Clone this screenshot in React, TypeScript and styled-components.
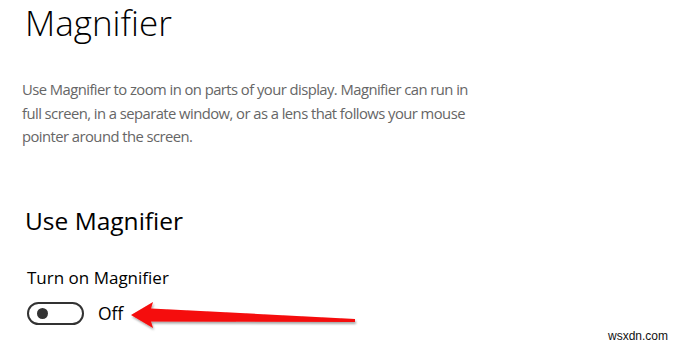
import React from 'react';
import styled, { createGlobalStyle } from 'styled-components';

const GlobalStyle = createGlobalStyle`
  html, body {
    margin: 0;
    padding: 0;
    background: #ffffff;
  }
  body {
    font-family: "Open Sans", "Noto Sans", sans-serif;
    color: #000000;
  }
`;

function RedArrow() {
  return (
    <ArrowSvg width="232" height="34" viewBox="0 0 232 34">
      <defs>
        <filter id="arrow-shadow" x="-5%" y="-30%" width="110%" height="170%">
          <feDropShadow dx="1" dy="2" stdDeviation="1.2" floodColor="#000" floodOpacity="0.35" />
        </filter>
      </defs>
      <path
        d="M2 15 L24 2 L22 8.5 L226 19 L226 22 L22 21.5 L24 28 Z"
        fill="#f50a0a"
        filter="url(#arrow-shadow)"
      />
    </ArrowSvg>
  );
}

function App() {
  return (
    <>
      <GlobalStyle />
      <Page>
        <Title>Magnifier</Title>
        <Description>
          Use Magnifier to zoom in on parts of your display. Magnifier can run in
          <br />
          full screen, in a separate window, or as a lens that follows your mouse
          <br />
          pointer around the screen.
        </Description>
        <SectionHeading>Use Magnifier</SectionHeading>
        <SettingLabel>Turn on Magnifier</SettingLabel>
        <ToggleRow>
          <Toggle>
            <Knob />
          </Toggle>
          <ToggleState>Off</ToggleState>
          <RedArrow />
        </ToggleRow>
        <Watermark>wsxdn.com</Watermark>
      </Page>
    </>
  );
}

const Page = styled.div`
  position: relative;
  width: 680px;
  height: 343px;
  padding-left: 25px;
  padding-top: 3px;
  box-sizing: border-box;
  overflow: hidden;
`;

const Title = styled.h1`
  margin: 0;
  font-family: "Open Sans", sans-serif;
  font-weight: 300;
  font-size: 35px;
  line-height: 40px;
  color: #000000;
`;

const Description = styled.p`
  margin: 35px 0 0 -3px;
  width: 520px;
  font-family: "Open Sans", sans-serif;
  font-size: 14.8px;
  line-height: 23.5px;
  color: #666666;
  letter-spacing: -0.55px;
  white-space: nowrap;
`;

const SectionHeading = styled.h2`
  margin: 57px 0 0 0;
  font-family: "Open Sans", sans-serif;
  font-weight: 400;
  font-size: 24.5px;
  line-height: 30px;
  color: #000000;
`;

const SettingLabel = styled.div`
  margin-top: 31px;
  margin-left: 2px;
  font-size: 17px;
  line-height: 22px;
  color: #000000;
`;

const ToggleRow = styled.div`
  display: flex;
  align-items: center;
  margin-top: 4px;
  margin-left: 2px;
`;

const Toggle = styled.div`
  width: 57px;
  height: 23px;
  box-sizing: border-box;
  border: 2px solid #333333;
  border-radius: 12px;
  display: flex;
  align-items: center;
  padding-left: 8px;
`;

const Knob = styled.span`
  width: 11px;
  height: 11px;
  border-radius: 50%;
  background: #333333;
`;

const ToggleState = styled.span`
  margin-left: 14px;
  font-size: 17.5px;
  color: #000000;
`;

const ArrowSvg = styled.svg`
  display: block;
  margin-left: 6px;
  margin-top: 7px;
`;

const Watermark = styled.span`
  position: absolute;
  right: 12px;
  bottom: 0px;
  font-family: "Liberation Sans", Arial, sans-serif;
  font-size: 12px;
  color: #111111;
`;

export default App;
